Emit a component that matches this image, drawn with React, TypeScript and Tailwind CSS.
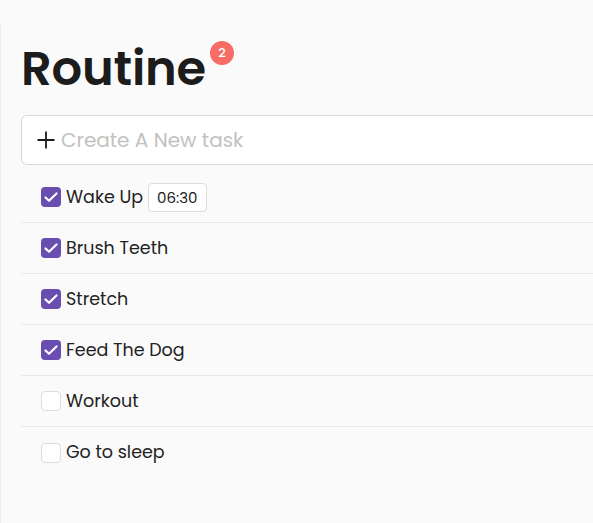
import React from 'react';

type Task = { name: string; done: boolean; time?: string };

const TASKS: Task[] = [
  { name: 'Wake Up', done: true, time: '06:30' },
  { name: 'Brush Teeth', done: true },
  { name: 'Stretch', done: true },
  { name: 'Feed The Dog', done: true },
  { name: 'Workout', done: false },
  { name: 'Go to sleep', done: false },
];

const FONT = { fontFamily: 'Poppins, Inter, "Noto Sans", sans-serif' };

function Check({ done }: { done: boolean }) {
  if (!done) {
    return <span className="h-5 w-5 shrink-0 rounded-[4px] border border-[#dcdcdc] bg-white" />;
  }
  return (
    <span className="flex h-5 w-5 shrink-0 items-center justify-center rounded-[4px] bg-[#6a4db0]">
      <svg viewBox="0 0 20 20" className="h-5 w-5" fill="none" stroke="white" strokeWidth="2.2" strokeLinecap="round" strokeLinejoin="round">
        <path d="M4.5 10.5l3.5 3.3L15.5 6.5" />
      </svg>
    </span>
  );
}

export default function App() {
  return (
    <div className="min-h-[523px] w-[593px] overflow-hidden bg-[#fafafa]" style={FONT}>
      <div className="mt-[22px] min-h-[501px] w-[720px] border-l border-[#f0f0f0] pl-[20px] pt-[21px]">
        <div className="flex items-start">
          <h1 className="text-[48px] font-semibold leading-[52px] tracking-[-0.2px] text-[#1c1c1c]">Routine</h1>
          <span className="ml-[4px] mt-[-2px] flex h-6 w-6 items-center justify-center rounded-full bg-[#f86c66] text-[13px] font-medium text-white">
            2
          </span>
        </div>

        <div className="mt-[20px] flex h-[50px] items-center gap-[5px] rounded-[6px] border border-[#d6d6d6] bg-white pl-[14px]">
          <svg viewBox="0 0 20 20" className="h-5 w-5" fill="none" stroke="#1c1c1c" strokeWidth="1.8">
            <path d="M10 1.5v17M1.5 10h17" />
          </svg>
          <span className="text-[20px] text-[#c2c2c2]">Create A New task</span>
        </div>

        <ul className="mt-[7px]">
          {TASKS.map((t, i) => (
            <li
              key={t.name}
              className={`flex h-[51px] items-center gap-[5px] pl-[20px] ${i < TASKS.length - 1 ? 'border-b border-[#e8e8e8]' : ''}`}
            >
              <Check done={t.done} />
              <span className="pb-[1px] text-[17.5px] leading-[24px] text-[#222]">{t.name}</span>
              {t.time && (
                <span className="rounded-[4px] border border-[#dcdcdc] bg-white px-[8px] py-[4px] text-[15px] leading-[19px] text-[#222]">
                  {t.time}
                </span>
              )}
            </li>
          ))}
        </ul>
      </div>
    </div>
  );
}
